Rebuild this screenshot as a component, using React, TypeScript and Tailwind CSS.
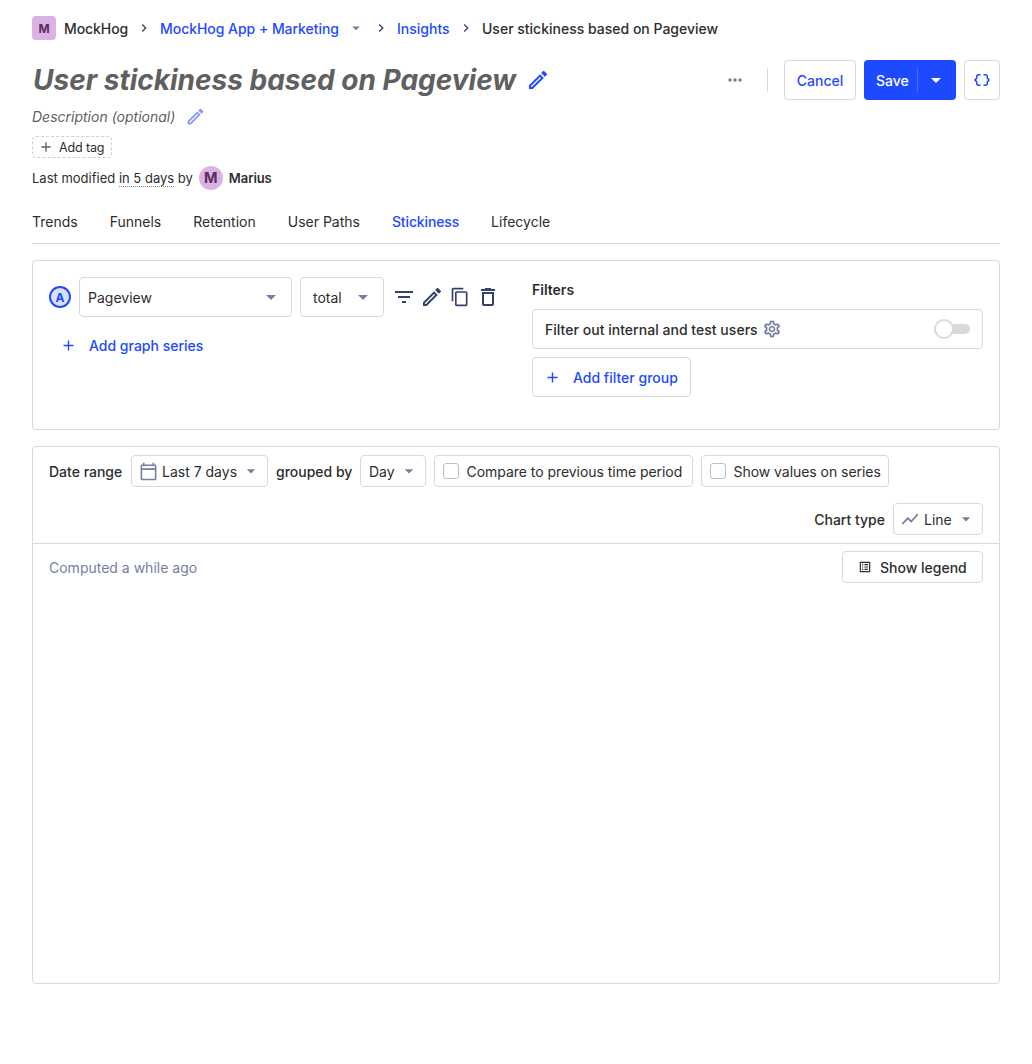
import React from "react";

type IconProps = { className?: string };

const icon = (path: string) =>
  function Icon({ className = "" }: IconProps) {
    return (
      <svg viewBox="0 0 24 24" fill="currentColor" className={`block shrink-0 ${className}`}>
        <path d={path} />
      </svg>
    );
  };

const Chevron = icon("M10 6 8.59 7.41 13.17 12l-4.58 4.59L10 18l6-6z");
const Caret = icon("m7 10 5 5 5-5z");
const Plus = icon("M19 13h-6v6h-2v-6H5v-2h6V5h2v6h6z");
const Pencil = icon(
  "m14.06 9.02.92.92L5.92 19H5v-.92l9.06-9.06ZM17.66 3c-.25 0-.51.1-.7.29l-1.83 1.83 3.75 3.75 1.83-1.83a.996.996 0 0 0 0-1.41l-2.34-2.34c-.2-.2-.45-.29-.71-.29Zm-3.6 3.19L3 17.25V21h3.75L17.81 9.94l-3.75-3.75Z",
);
const Filter = icon("M10 18h4v-2h-4v2ZM3 6v2h18V6H3Zm3 7h12v-2H6v2Z");
const Copy = icon(
  "M16 1H4c-1.1 0-2 .9-2 2v14h2V3h12V1Zm3 4H8c-1.1 0-2 .9-2 2v14c0 1.1.9 2 2 2h11c1.1 0 2-.9 2-2V7c0-1.1-.9-2-2-2Zm0 16H8V7h11v14Z",
);
const Trash = icon(
  "M6 19c0 1.1.9 2 2 2h8c1.1 0 2-.9 2-2V7H6v12ZM8 9h8v10H8V9Zm7.5-5-1-1h-5l-1 1H5v2h14V4h-3.5Z",
);
const Dots = icon(
  "M6 10c-1.100 0-2 .9-2 2s.9 2 2 2 2-.9 2-2-.9-2-2-2Zm12 0c-1.100 0-2 .9-2 2s.9 2 2 2 2-.9 2-2-.9-2-2-2Zm-6 0c-1.100 0-2 .9-2 2s.9 2 2 2 2-.9 2-2-.9-2-2-2Z",
);
const Braces = icon(
  "M4 7v2c0 .55-.45 1-1 1H2v4h1c.55 0 1 .45 1 1v2c0 1.650 1.350 3 3 3h3v-2H7c-.55 0-1-.45-1-1v-2c0-1.300-.84-2.420-2-2.830v-.34C5.160 11.420 6 10.300 6 9V7c0-.55.45-1 1-1h3V4H7C5.350 4 4 5.350 4 7Zm17 3c-.55 0-1-.45-1-1V7c0-1.650-1.350-3-3-3h-3v2h3c.55 0 1 .45 1 1v2c0 1.300.84 2.420 2 2.830v.34c-1.160.41-2 1.520-2 2.830v2c0 .55-.45 1-1 1h-3v2h3c1.650 0 3-1.350 3-3v-2c0-.55.45-1 1-1h1v-4h-1Z",
);
const Gear = icon(
  "M19.430 12.980c.04-.32.07-.64.07-.98s-.03-.66-.07-.98l2.110-1.650c.19-.15.24-.42.12-.64l-2-3.460a.5.5 0 0 0-.61-.22l-2.490 1c-.52-.4-1.080-.73-1.690-.98l-.38-2.650A.488.488 0 0 0 14 2h-4c-.25 0-.46.18-.49.42l-.38 2.650c-.61.25-1.170.59-1.690.98l-2.490-1a.5.5 0 0 0-.61.22l-2 3.460c-.13.22-.07.49.12.64l2.110 1.650c-.04.32-.07.65-.07.98s.03.66.07.98l-2.110 1.650c-.19.15-.24.42-.12.64l2 3.460c.12.22.38.3.61.22l2.490-1c.52.4 1.080.73 1.690.98l.38 2.650c.03.24.24.42.49.42h4c.25 0 .46-.18.49-.42l.38-2.650c.61-.25 1.170-.59 1.690-.98l2.490 1c.23.09.49 0 .61-.22l2-3.460a.5.5 0 0 0-.12-.64l-2.110-1.650Zm-1.980-1.710c.04.31.05.52.05.73s-.02.43-.05.73l-.14 1.130.89.7 1.080.84-.7 1.210-1.270-.51-1.040-.42-.9.68c-.43.32-.84.56-1.250.73l-1.060.43-.16 1.130-.2 1.350h-1.400l-.19-1.350-.16-1.130-1.060-.43c-.43-.18-.83-.41-1.230-.71l-.91-.7-1.060.43-1.270.51-.7-1.210 1.080-.84.89-.7-.14-1.130c-.03-.31-.05-.54-.05-.74s.02-.43.05-.73l.14-1.130-.89-.7-1.080-.84.7-1.210 1.270.51 1.040.42.9-.68c.43-.32.84-.56 1.250-.73l1.060-.43.16-1.130.2-1.350h1.390l.19 1.350.16 1.130 1.060.43c.43.18.83.41 1.230.71l.91.7 1.060-.43 1.270-.51.7 1.210-1.070.85-.89.7.14 1.130ZM12 8c-2.210 0-4 1.790-4 4s1.790 4 4 4 4-1.790 4-4-1.790-4-4-4Zm0 6c-1.100 0-2-.9-2-2s.9-2 2-2 2 .9 2 2-.9 2-2 2Z",
);
const Calendar = icon(
  "M20 3h-1V1h-2v2H7V1H5v2H4c-1.100 0-2 .9-2 2v16c0 1.100.9 2 2 2h16c1.100 0 2-.9 2-2V5c0-1.100-.9-2-2-2Zm0 18H4V10h16v11Zm0-13H4V5h16v3Z",
);
const Line = icon("M3.500 18.490 9.500 12.480l4 4L22 6.920 20.590 5.510 13.500 13.480l-4-4L2 16.990z");
const Legend = icon(
  "M19 5v14H5V5h14m1.100-2H3.900c-.5 0-.9.400-.9.900v16.200c0 .400.400.900.900.900h16.200c.400 0 .900-.500.900-.900V3.900c0-.500-.500-.900-.900-.900ZM11 7h6v2h-6V7Zm0 4h6v2h-6v-2Zm0 4h6v2h-6v-2ZM7 7h2v2H7V7Zm0 4h2v2H7v-2Zm0 4h2v2H7v-2Z",
);

const tabs = ["Trends", "Funnels", "Retention", "User Paths", "Stickiness", "Lifecycle"];

function Checkbox({ label, className }: { label: string; className: string }) {
  return (
    <label className={`flex h-8 items-center rounded border border-[#d9d9d9] pl-2 ${className}`}>
      <span className="size-4 rounded-[3px] border border-[#bfbfbf]" />
      <span className="ml-[7.5px] pt-[2px] tracking-[-0.003em]">{label}</span>
    </label>
  );
}

export default function App() {
  return (
    <div className="h-[1064px] w-[1032px] bg-white px-8 pt-4 font-['Inter',sans-serif] text-sm whitespace-nowrap text-[#2d2d2d]">
      <nav className="flex h-6 items-center font-medium">
        <span className="flex size-6 items-center justify-center rounded bg-[#dcb1e3] pt-px text-xs font-bold text-[#572e5e]">M</span>
        <span className="ml-2 w-[64px] pt-[2px] tracking-[-0.005em]">MockHog</span>
        <Chevron className="ml-2 size-4 text-[#35416b]" />
        <span className="ml-2 w-[179px] pt-[2px] tracking-[-0.003em] text-[#1d4aff]">MockHog App + Marketing</span>
        <Caret className="ml-2 size-[18px] text-[#747ea2]" />
        <Chevron className="ml-2 size-4 text-[#35416b]" />
        <span className="ml-2 w-[53px] pt-[2px] text-[#1d4aff]">Insights</span>
        <Chevron className="ml-2 size-4 text-[#35416b]" />
        <span className="ml-2 pt-[2px]">User stickiness based on Pageview</span>
      </nav>

      <header className="mt-5 flex h-10 items-center">
        <h1 className="w-[486px] pl-px text-[28px] font-bold text-[#606060] italic">User stickiness based on Pageview</h1>
        <Pencil className="ml-2 size-6 text-[#1d4aff]" />
        <div className="ml-auto flex items-center">
          <Dots className="size-5 text-[#747ea2]" />
          <span className="mr-4 ml-[22px] h-6 w-px bg-[#d9d9d9]" />
          <button className="h-10 w-[72px] rounded border border-[#d9d9d9] pt-[2px] font-medium text-[#1d4aff]">Cancel</button>
          <div className="ml-2 flex h-10 w-[92px] items-center rounded bg-[#1d4aff] font-medium text-white">
            <span className="w-[53px] pt-[2px] pl-3">Save</span>
            <span className="h-6 w-px bg-[#4a6eff]" />
            <Caret className="ml-[6px] size-6" />
          </div>
          <button className="ml-2 flex h-10 w-9 items-center justify-center rounded border border-[#d9d9d9] text-[#1d4aff]">
            <Braces className="size-[18px]" />
          </button>
        </div>
      </header>

      <div className="mt-[6px] flex h-[22px] items-center text-[#5f5f5f]">
        <span className="w-[143px] italic">Description (optional)</span>
        <Pencil className="mb-[2px] ml-[10px] size-[21px] text-[#8299ff]" />
      </div>
      <div className="mt-2 flex h-[22px] w-20 items-center rounded border border-dashed border-[#d0d0d0] pl-[5px] text-[12.5px]">
        <Plus className="size-4 text-[#606060]" />
        <span className="ml-[5px] pt-px tracking-[-0.01em]">Add tag</span>
      </div>
      <div className="mt-2 flex h-6 items-center text-[13px]">
        <span className="pt-px">Last modified&nbsp;</span>
        <span className="mt-[2px] border-b border-dotted border-[#8c8c8c] leading-[15px]">in 5 days</span>
        <span className="pt-px">&nbsp;by</span>
        <span className="ml-[6px] flex size-6 items-center justify-center rounded-full bg-[#dcb1e3] pt-px text-[14.5px] font-bold text-[#572e5e]">M</span>
        <span className="ml-[6px] pt-px font-semibold tracking-[-0.005em]">Marius</span>
      </div>

      <div className="mt-[10px] flex h-11 items-center gap-8 border-b border-[#d9d9d9]">
        {tabs.map((tab) => (
          <span key={tab} className={tab === "Stickiness" ? "font-medium tracking-[-0.01em] text-[#1d4aff]" : ""}>
            {tab}
          </span>
        ))}
      </div>

      <section className="mt-4 flex h-[170px] rounded border border-[#d9d9d9] p-4">
        <div className="w-[483px] shrink-0">
          <div className="flex items-center">
            <span className="flex size-[22px] items-center justify-center rounded-full border-2 border-[#1d4aff] bg-[#d9e0ff] pt-px text-xs font-bold text-[#1d4aff]">A</span>
            <div className="ml-2 flex h-10 w-[213px] items-center justify-between rounded border border-[#d9d9d9] px-2">
              <span className="pt-[2px]">Pageview</span>
              <Caret className="size-6 text-[#747ea2]" />
            </div>
            <div className="ml-2 flex h-10 w-[84px] items-center justify-between rounded border border-[#d9d9d9] pr-2 pl-3">
              <span className="pt-[2px]">total</span>
              <Caret className="size-6 text-[#747ea2]" />
            </div>
            <div className="ml-2 flex items-center gap-1 text-[#35416b]">
              <Filter className="size-6" />
              <Pencil className="size-6" />
              <Copy className="mx-[2px] size-5" />
              <Trash className="size-6" />
            </div>
          </div>
          <div className="mt-2 flex h-10 items-center pl-[11px] font-medium text-[#1d4aff]">
            <Plus className="size-[17px]" />
            <span className="ml-3 pt-[2px]">Add graph series</span>
          </div>
        </div>
        <div className="flex-1">
          <h2 className="h-8 pt-[3px] font-semibold">Filters</h2>
          <div className="flex h-10 items-center rounded border border-[#d9d9d9] px-3 font-medium">
            <span className="w-[213px] pt-[2px] tracking-[0.002em]">Filter out internal and test users</span>
            <Gear className="ml-1 size-5 text-[#747ea2]" />
            <span className="relative ml-auto h-[10px] w-9 rounded-full bg-[#d9d9d9]">
              <span className="absolute -top-[5px] left-0 size-5 rounded-full border-2 border-[#d9d9d9] bg-white" />
            </span>
          </div>
          <button className="mt-2 flex h-10 w-[159px] items-center rounded border border-[#d9d9d9] pl-[11px] font-medium text-[#1d4aff]">
            <Plus className="size-[17px]" />
            <span className="ml-3 pt-[2px]">Add filter group</span>
          </button>
        </div>
      </section>

      <section className="mt-4 h-[538px] rounded border border-[#d9d9d9]">
        <div className="flex h-[97px] flex-col gap-4 border-b border-[#d9d9d9] px-4 pt-2">
          <div className="flex items-center gap-2">
            <span className="w-[74px] pt-[2px] font-medium">Date range</span>
            <div className="flex h-8 w-[137px] items-center rounded border border-[#d9d9d9] pl-[6.5px]">
              <Calendar className="size-[19px] text-[#747ea2]" />
              <span className="ml-[4.5px] pt-[2px]">Last 7 days</span>
              <Caret className="mr-[6px] ml-auto size-5 text-[#747ea2]" />
            </div>
            <span className="w-[76px] pt-[2px] font-medium">grouped by</span>
            <div className="flex h-8 w-[66px] items-center justify-between rounded border border-[#d9d9d9] pr-[6px] pl-2">
              <span className="pt-[2px]">Day</span>
              <Caret className="size-5 text-[#747ea2]" />
            </div>
            <Checkbox label="Compare to previous time period" className="w-[259px]" />
            <Checkbox label="Show values on series" className="w-[188px]" />
          </div>
          <div className="flex items-center justify-end gap-2">
            <span className="pt-[2px] font-medium">Chart type</span>
            <div className="flex h-8 w-[90px] items-center rounded border border-[#d9d9d9] pl-[6px]">
              <Line className="size-5 text-[#747ea2]" />
              <span className="ml-1 pt-[2px]">Line</span>
              <Caret className="mr-[6px] ml-auto size-5 text-[#747ea2]" />
            </div>
          </div>
        </div>
        <div className="flex items-center justify-between px-4 pt-[7px]">
          <span className="pt-[2px] text-[#747ea2]">Computed a while ago</span>
          <button className="flex h-8 w-[141px] items-center rounded border border-[#d9d9d9] pl-[15px] font-medium">
            <Legend className="size-[14px]" />
            <span className="ml-2 pt-[2px]">Show legend</span>
          </button>
        </div>
      </section>
    </div>
  );
}
